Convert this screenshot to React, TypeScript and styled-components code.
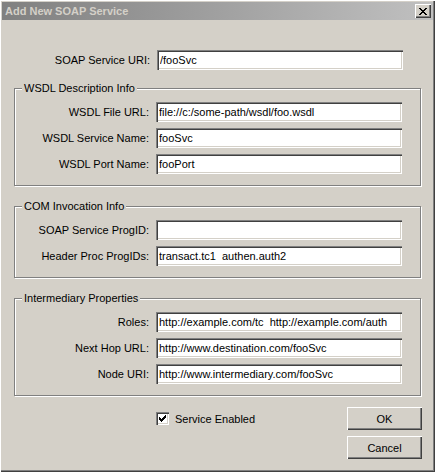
import React from "react";
import styled, { createGlobalStyle } from "styled-components";

const GlobalStyle = createGlobalStyle`
  html, body {
    margin: 0;
    padding: 0;
    background: #d4d0c8;
  }
  body {
    font-family: "Liberation Sans", Arial, sans-serif;
    font-size: 11px;
    color: #000;
  }
`;

const Window = styled.div`
  width: 435px;
  height: 472px;
  box-sizing: border-box;
  padding: 2px;
  background: #d4d0c8;
  box-shadow: inset 1px 1px 0 #ffffff, inset -1px -1px 0 #404040,
    inset -2px -2px 0 #808080;
  display: flex;
  flex-direction: column;
`;

const TitleBar = styled.div`
  height: 18px;
  display: flex;
  align-items: center;
  justify-content: space-between;
  padding: 0 2px 0 3px;
  background: linear-gradient(to right, #808080, #c0c0c0);
`;

const Title = styled.span`
  font-weight: bold;
  font-size: 11px;
  color: #d4d0c8;
`;

const CloseButton = styled.div`
  width: 16px;
  height: 14px;
  display: flex;
  align-items: center;
  justify-content: center;
  background: #d4d0c8;
  box-shadow: inset 1px 1px 0 #ffffff, inset -1px -1px 0 #404040,
    inset -2px -2px 0 #808080;
`;

const Body = styled.div`
  display: flex;
  flex-direction: column;
  padding: 30px 12px 0 12px;
`;

const Row = styled.div<{ $inset?: number }>`
  display: grid;
  grid-template-columns: 1fr 246px;
  column-gap: 7px;
  align-items: center;
  padding-right: ${(p) => p.$inset ?? 18}px;
`;

const Label = styled.label`
  text-align: right;
  white-space: nowrap;
`;

const TextBox = styled.input`
  height: 20px;
  box-sizing: border-box;
  margin: 0;
  border: none;
  outline: none;
  padding: 0 3px;
  background: #fff;
  font-family: inherit;
  font-size: 11px;
  color: #000;
  box-shadow: inset 1px 1px 0 #808080, inset 2px 2px 0 #404040,
    inset -1px -1px 0 #ffffff, inset -2px -2px 0 #d4d0c8;
`;

const Group = styled.div`
  position: relative;
  margin-top: 18px;
  display: flex;
  flex-direction: column;
  gap: 6px;
  padding: 13px 0 11px 0;
  border: 1px solid #808080;
  box-shadow: inset 1px 1px 0 #ffffff, 1px 1px 0 #ffffff;

  & + & {
    margin-top: 20px;
  }
`;

const Legend = styled.span`
  position: absolute;
  top: -7px;
  left: 7px;
  padding: 0 2px;
  line-height: 13px;
  background: #d4d0c8;
`;

const Footer = styled.div`
  display: flex;
  align-items: flex-start;
  margin-top: 11px;
  padding-left: 142px;
`;

const CheckRow = styled.label`
  height: 23px;
  display: flex;
  align-items: center;
  gap: 6px;
`;

const CheckBox = styled.span`
  width: 13px;
  height: 13px;
  box-sizing: border-box;
  background: #fff;
  box-shadow: inset 1px 1px 0 #808080, inset 2px 2px 0 #404040,
    inset -1px -1px 0 #ffffff, inset -2px -2px 0 #d4d0c8;
  display: flex;
  align-items: center;
  justify-content: center;
`;

const ButtonStack = styled.div`
  margin-left: auto;
  margin-right: -1px;
  display: flex;
  flex-direction: column;
  gap: 6px;
`;

const Button = styled.button`
  width: 75px;
  height: 23px;
  margin: 0;
  padding: 0;
  border: none;
  background: #d4d0c8;
  font-family: inherit;
  font-size: 11px;
  color: #000;
  box-shadow: inset 1px 1px 0 #ffffff, inset -1px -1px 0 #404040,
    inset -2px -2px 0 #808080;
`;

// classic 8x7 close glyph, drawn row by row
const closeRows: [number, number][][] = [
  [[0, 2], [6, 2]],
  [[1, 2], [5, 2]],
  [[2, 4]],
  [[3, 2]],
  [[2, 4]],
  [[1, 2], [5, 2]],
  [[0, 2], [6, 2]],
];

const CloseGlyph = () => (
  <svg width="8" height="7" shapeRendering="crispEdges">
    {closeRows.map((spans, y) =>
      spans.map(([x, w]) => (
        <rect key={`${y}-${x}`} x={x} y={y} width={w} height={1} fill="#000" />
      ))
    )}
  </svg>
);

// 7px check mark: each column is a 3px tall run
const checkTops = [2, 3, 4, 3, 2, 1, 0];

const CheckGlyph = () => (
  <svg width="7" height="7" shapeRendering="crispEdges">
    {checkTops.map((top, x) => (
      <rect key={x} x={x} y={top} width={1} height={3} fill="#000" />
    ))}
  </svg>
);

interface Field {
  label: string;
  value: string;
}

const wsdlFields: Field[] = [
  { label: "WSDL File URL:", value: "file://c:/some-path/wsdl/foo.wsdl" },
  { label: "WSDL Service Name:", value: "fooSvc" },
  { label: "WSDL Port Name:", value: "fooPort" },
];

const comFields: Field[] = [
  { label: "SOAP Service ProgID:", value: "" },
  { label: "Header Proc ProgIDs:", value: "transact.tc1  authen.auth2" },
];

const intermediaryFields: Field[] = [
  { label: "Roles:", value: "http://example.com/tc  http://example.com/auth" },
  { label: "Next Hop URL:", value: "http://www.destination.com/fooSvc" },
  { label: "Node URI:", value: "http://www.intermediary.com/fooSvc" },
];

const FieldGroup = ({ title, fields }: { title: string; fields: Field[] }) => (
  <Group>
    <Legend>{title}</Legend>
    {fields.map((f) => (
      <Row key={f.label}>
        <Label>{f.label}</Label>
        <TextBox defaultValue={f.value} />
      </Row>
    ))}
  </Group>
);

const App = () => {
  return (
    <>
      <GlobalStyle />
      <Window>
        <TitleBar>
          <Title>Add New SOAP Service</Title>
          <CloseButton>
            <CloseGlyph />
          </CloseButton>
        </TitleBar>
        <Body>
          <Row>
            <Label>SOAP Service URI:</Label>
            <TextBox defaultValue="/fooSvc" />
          </Row>
          <FieldGroup title="WSDL Description Info" fields={wsdlFields} />
          <FieldGroup title="COM Invocation Info" fields={comFields} />
          <FieldGroup title="Intermediary Properties" fields={intermediaryFields} />
          <Footer>
            <CheckRow>
              <CheckBox>
                <CheckGlyph />
              </CheckBox>
              Service Enabled
            </CheckRow>
            <ButtonStack>
              <Button>OK</Button>
              <Button>Cancel</Button>
            </ButtonStack>
          </Footer>
        </Body>
      </Window>
    </>
  );
};

export default App;
